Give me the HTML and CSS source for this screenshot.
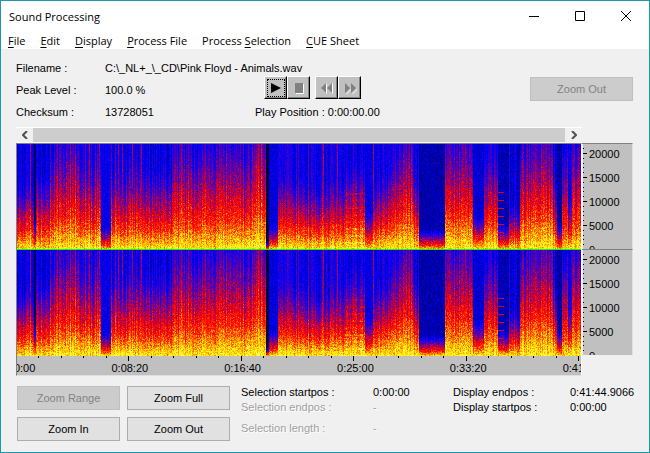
FILE: index.html
```html
<!DOCTYPE html>
<html lang="en">
<head>
    <meta charset="UTF-8">
    <meta name="viewport" content="width=device-width, initial-scale=1.0">
    <title>Sound Processing</title>
    <link rel="stylesheet" href="styles.css">
</head>
<body>

<div class="window">
    <header class="titlebar">
        <h1>Sound Processing</h1>
        <div class="caption-buttons">
            <button class="caption-btn" aria-label="Minimize"><svg width="10" height="10" viewBox="0 0 10 10"><path d="M0 5.5h10"/></svg></button>
            <button class="caption-btn" aria-label="Maximize"><svg width="10" height="10" viewBox="0 0 10 10"><path d="M.5 .5h9v9h-9z"/></svg></button>
            <button class="caption-btn" aria-label="Close"><svg width="10" height="10" viewBox="0 0 10 10"><path d="M0 0l10 10M10 0L0 10"/></svg></button>
        </div>
    </header>

    <nav class="menu">
        <a href="#"><u>F</u>ile</a>
        <a href="#"><u>E</u>dit</a>
        <a href="#"><u>D</u>isplay</a>
        <a href="#"><u>P</u>rocess File</a>
        <a href="#">Process <u>S</u>election</a>
        <a href="#"><u>C</u>UE Sheet</a>
    </nav>

    <main class="content">
        <section class="info">
            <dl class="file-info">
                <dt>Filename :</dt><dd>C:\_NL+_\_CD\Pink Floyd - Animals.wav</dd>
                <dt>Peak Level :</dt><dd>100.0 %</dd>
                <dt>Checksum :</dt><dd>13728051</dd>
            </dl>
            <div class="player">
                <div class="player-buttons">
                    <button class="player-btn focused" aria-label="Play"><svg width="16" height="16" viewBox="0 0 16 16"><path d="M3 3L13 8L3 13z"/></svg></button>
                    <button class="player-btn" aria-label="Stop" disabled><svg width="16" height="16" viewBox="0 0 16 16"><path class="hl" d="M5 4h8v10H5z"/><path d="M4 3h8v10H4z"/></svg></button>
                    <button class="player-btn rewind" aria-label="Rewind" disabled><svg width="16" height="16" viewBox="0 0 16 16"><path class="hl" d="M8 3v11L3 9zM14 3v11L9 9z"/><path d="M7 3v10L2 8zM13 3v10L8 8z"/></svg></button>
                    <button class="player-btn" aria-label="Forward" disabled><svg width="16" height="16" viewBox="0 0 16 16"><path class="hl" d="M4 14L9 9v1L5 14zM10 14L15 9v1L11 14z"/><path d="M3 3L8 8L3 13zM9 3L14 8L9 13z"/></svg></button>
                </div>
                <p class="play-position">Play Position : <span>0:00:00.00</span></p>
            </div>
            <button class="btn zoom-top" disabled>Zoom Out</button>
        </section>

        <section class="display">
            <div class="scrollbar">
                <button class="scroll-btn" aria-label="Scroll left"><svg width="6" height="8" viewBox="0 0 6 8"><path d="M5 0L1 4L5 8"/></svg></button>
                <div class="scroll-thumb"></div>
                <button class="scroll-btn" aria-label="Scroll right"><svg width="6" height="8" viewBox="0 0 6 8"><path d="M1 0L5 4L1 8"/></svg></button>
            </div>

            <div class="channels">
                <canvas class="spectrum" data-seed="11"></canvas>
                <canvas class="spectrum" data-seed="47"></canvas>
                <canvas class="time-ticks"></canvas>
                <div class="time-labels">
                    <span>0:00:00</span><span>0:08:20</span><span>0:16:40</span><span>0:25:00</span><span>0:33:20</span><span>0:41:40</span>
                </div>
            </div>

            <div class="frequencies">
                <div class="freq-axis">
                    <canvas class="freq-ticks"></canvas>
                    <div class="freq-labels"><span>20000</span><span>15000</span><span>10000</span><span>5000</span><span>0</span></div>
                </div>
                <div class="freq-axis">
                    <canvas class="freq-ticks"></canvas>
                    <div class="freq-labels"><span>20000</span><span>15000</span><span>10000</span><span>5000</span><span>0</span></div>
                </div>
            </div>
        </section>

        <section class="footer">
            <div class="zoom-buttons">
                <button class="btn" disabled>Zoom Range</button>
                <button class="btn">Zoom Full</button>
                <button class="btn">Zoom In</button>
                <button class="btn">Zoom Out</button>
            </div>
            <dl class="positions selection">
                <dt>Selection startpos :</dt><dd>0:00:00</dd>
                <dt class="off">Selection endpos :</dt><dd class="off">-</dd>
                <dt class="off length">Selection length :</dt><dd class="off length">-</dd>
            </dl>
            <dl class="positions range">
                <dt>Display endpos :</dt><dd>0:41:44.9066</dd>
                <dt>Display startpos :</dt><dd>0:00:00</dd>
            </dl>
        </section>
    </main>
</div>

<script src="spectrum.js"></script>
</body>
</html>
```
FILE: styles.css
```css
* {
    box-sizing: border-box;
}
body {
    margin: 0;
    background: #f0f0f0;
    color: #000;
    font-family: "Liberation Sans", Arial, sans-serif;
    font-size: 11px;
    line-height: 15px;
}
button {
    font: inherit;
    color: inherit;
    padding: 0;
}
dl, dd, p, h1 {
    margin: 0;
}
.window {
    min-height: 100vh;
    border: 1px solid #1c97a8;
    background: #f0f0f0;
}

/* Title bar and menu */
.titlebar {
    display: flex;
    align-items: center;
    justify-content: space-between;
    height: 30px;
    padding-left: 8px;
    background: #fff;
}
.titlebar h1 {
    font-family: "Open Sans", "Noto Sans", sans-serif;
    font-size: 11px;
    font-weight: 400;
}
.caption-buttons {
    display: flex;
}
.caption-btn {
    display: flex;
    align-items: center;
    justify-content: center;
    width: 46px;
    height: 28px;
    border: none;
    background: none;
}
.caption-btn svg {
    fill: none;
    stroke: #000;
}
.menu {
    display: flex;
    gap: 15px;
    height: 18px;
    padding-left: 7px;
    background: #fff;
    font-family: "Open Sans", "Noto Sans", sans-serif;
    line-height: 20px;
}
.menu a {
    color: #000;
    text-decoration: none;
    white-space: nowrap;
}
.menu u {
    text-underline-offset: 2px;
}
.content {
    padding: 8px 16px 0 15px;
}

/* File info and player */
.info {
    display: flex;
}
.file-info {
    display: grid;
    grid-template-columns: 89px 145px;
    grid-auto-rows: 22px;
    line-height: 22px;
    white-space: nowrap;
}
.player {
    display: flex;
    flex-direction: column;
    padding: 19px 0 0 5px;
}
.player-buttons {
    display: flex;
    padding-left: 9px;
}
.player-btn {
    display: flex;
    align-items: center;
    justify-content: center;
    width: 23px;
    height: 23px;
    border: 1px solid;
    border-color: #fff #000 #000 #fff;
    background: #c0c0c0;
    box-shadow: inset -1px -1px #808080;
}
.player-btn.focused svg {
    outline: 1px dotted #000;
}
.player-btn.rewind {
    margin-left: 5px;
}
.player-btn:disabled path {
    fill: #808080;
}
.player-btn:disabled .hl {
    fill: #fff;
}
.play-position {
    line-height: 22px;
    padding-top: 2px;
}
.btn {
    width: 103px;
    height: 24px;
    border: 1px solid #adadad;
    background: #e1e1e1;
}
.btn:disabled {
    border-color: #bfbfbf;
    background: #ccc;
    color: #838383;
}
.zoom-top {
    margin: 20px 0 0 auto;
}

/* Spectral display */
.display {
    display: grid;
    grid-template-columns: 1fr 51px;
    padding-top: 4px;
}
.scrollbar {
    grid-column: 1;
    display: flex;
    height: 16px;
    border-top: 1px solid #fff;
    border-bottom: 1px solid #f8f8f8;
}
.scroll-btn {
    display: flex;
    align-items: center;
    justify-content: center;
    width: 17px;
    border: none;
    background: #f0f0f0;
}
.scroll-btn svg {
    fill: none;
    stroke: #505050;
    stroke-width: 2;
}
.scroll-thumb {
    flex: 1;
    background: #cdcdcd;
}
.channels {
    grid-column: 1;
    min-width: 0;
    border: 1px solid #808080;
    border-right-color: #fff;
    border-bottom-color: #e0e0e0;
    background: #c0c0c0;
}
.channels canvas {
    display: block;
    width: 100%;
}
.spectrum {
    height: 106px;
    background: #0000e0;
}
.channels .time-ticks {
    height: 5px;
}
.time-labels {
    display: flex;
    justify-content: center;
    height: 14px;
    overflow: hidden;
    line-height: 14px;
    text-align: center;
}
.time-labels span {
    flex: 0 0 20%;
}
.frequencies {
    display: flex;
    flex-direction: column;
}
.freq-axis {
    display: flex;
    height: 106px;
    overflow: hidden;
    border-top: 1px solid #808080;
    border-right: 1px solid #e0e0e0;
    background: #c0c0c0;
}
.freq-ticks {
    width: 5px;
    height: 105px;
}
.freq-labels {
    margin-top: -2px;
    padding-left: 2px;
    line-height: 24px;
}
.freq-labels span {
    display: block;
}

/* Zoom buttons and positions */
.footer {
    display: flex;
    padding-top: 10px;
}
.zoom-buttons {
    display: grid;
    grid-template-columns: 103px 103px;
    gap: 7px;
    padding-left: 1px;
}
.positions {
    display: grid;
    grid-auto-rows: 15px;
    align-content: start;
    line-height: 13px;
    white-space: nowrap;
}
.selection {
    grid-template-columns: 132px 80px;
    padding-left: 11px;
}
.range {
    grid-template-columns: 117px 63px;
}
.off {
    color: #a0a0a0;
    text-shadow: 1px 1px #fff;
}
.length {
    padding-top: 6px;
}
```
FILE: spectrum.js
```js
// Total length and tick spacing of the time axis, in seconds
const DURATION = 2504.9;
const MAJOR = 500;
const MINOR = 100;

// [start, end, loudness, bass, floor], start and end on a 0-565 scale
const SCALE = 565;
const segments = [
    [0, 17, 0.56, 0.08, 0.25],
    [17, 19, 0.25, 0.03, 0.1],
    [19, 34, 0.66, 0.08, 0.26],
    [34, 49, 0.82, 0.16, 0.29],
    [49, 62, 0.98, 0.16, 0.29],
    [62, 77, 0.7, 0.14, 0.29],
    [77, 84, 0.82, 0.14, 0.29],
    [84, 94, 0.18, 0.02, 0.26],
    [94, 112, 0.66, 0.1, 0.27],
    [112, 130, 0.72, 0.1, 0.27],
    [130, 155, 0.68, 0.1, 0.24],
    [155, 183, 0.82, 0.1, 0.29],
    [183, 225, 0.88, 0.14, 0.29],
    [225, 236, 0.76, 0.18, 0.28],
    [236, 249, 1.02, 0.2, 0.31],
    [249, 252, 0.08, 0.02, 0.07],
    [252, 261, 0.2, 0.03, 0.24],
    [261, 290, 0.58, 0.12, 0.27],
    [290, 308, 0.52, 0.12, 0.27],
    [308, 328, 0.56, 0.1, 0.27],
    [328, 348, 0.72, 0.15, 0.26],
    [348, 356, 0.32, 0.05, 0.25],
    [356, 374, 0.6, 0.14, 0.27],
    [374, 384, 0.8, 0.2, 0.29],
    [384, 396, 0.92, 0.22, 0.3],
    [396, 402, 0.64, 0.18, 0.26],
    [402, 428, 0.17, 0.02, 0.19],
    [428, 456, 0.9, 0.18, 0.29],
    [456, 467, 0.29, 0.1, 0.23],
    [467, 481, 0.8, 0.16, 0.27],
    [481, 492, 0.22, 0.03, 0.2],
    [492, 503, 0.38, 0.08, 0.23],
    [503, 520, 0.9, 0.22, 0.29],
    [520, 536, 0.98, 0.24, 0.3],
    [536, 540, 0.62, 0.13, 0.26],
    [540, 545, 0.22, 0.02, 0.18],
    [545, 551, 0.9, 0.08, 0.28],
    [551, 555, 0.4, 0.08, 0.24],
    [555, 565, 0.9, 0.1, 0.28]
];

// Single loud moments
const peaks = [13, 53, 58, 72, 82, 101, 105, 115, 124, 307, 321, 357, 449, 530];

const palette = [
    [0, 0, 0, 0],
    [0.14, 0, 0, 120],
    [0.27, 0, 0, 255],
    [0.43, 120, 0, 140],
    [0.57, 240, 0, 10],
    [0.66, 255, 30, 0],
    [0.76, 255, 130, 0],
    [0.87, 255, 235, 0],
    [1, 255, 255, 120]
];

function colorOf(v) {
    v = Math.max(0, Math.min(1, v));
    let i = 1;
    while (palette[i][0] < v) i++;
    const a = palette[i - 1];
    const b = palette[i];
    const k = (v - a[0]) / (b[0] - a[0]);
    return [1, 2, 3].map(c => a[c] + (b[c] - a[c]) * k);
}

function randomFrom(seed) {
    return () => {
        seed = (seed * 1664525 + 1013904223) >>> 0;
        return seed / 4294967296;
    };
}

function fitCanvas(canvas) {
    canvas.width = canvas.clientWidth;
    canvas.height = canvas.clientHeight;
    return canvas.getContext('2d');
}

// Falls from the bass at the bottom to the floor at the top
function level(t, seg, loud) {
    const top = loud * 1.2;
    const floor = seg[4];
    const fall = t < top ? Math.pow(1 - t / top, 1.35) : 0;
    const boost = Math.max(0, 1 - t / (seg[3] * 2)) * 0.06;
    return floor + (0.84 - floor) * fall + boost;
}

function drawSpectrum(canvas) {
    const ctx = fitCanvas(canvas);
    const w = canvas.width;
    const h = canvas.height;
    const columns = randomFrom(5); // both channels share the same columns
    const grain = randomFrom(Number(canvas.dataset.seed));
    const image = ctx.createImageData(w, h);

    for (let x = 0; x < w; x++) {
        const pos = x * SCALE / w;
        const seg = segments.find(s => pos < s[1]);
        const quiet = seg[2] < 0.35;
        const peak = peaks.includes(Math.round(pos));
        const swing = columns() - 0.5;
        const burst = columns() > 0.86 && !quiet ? 0.08 : 0;
        const loud = seg[2] * (1 + swing * 0.22);

        for (let y = 0; y < h; y++) {
            const t = 1 - y / h;
            let v = level(t, seg, loud);
            v += swing * (quiet ? 0.02 : 0.09) + burst * Math.min(1, t * 2);
            if (peak) v = Math.max(v + 0.07, 0.47);
            // wide grain where it is loud, fine grain over the blue
            v += (grain() + grain() - 1) * (v > 0.4 ? 0.13 : 0.07);
            // harmonics
            if (pos > 328 && pos < 348 && t < 0.55 && y % 7 < 2) v += 0.05;
            if (pos > 481 && pos < 487 && t < 0.6 && y % 8 < 1) v = Math.max(v, 0.55);

            const [r, g, b] = colorOf(v);
            const i = (y * w + x) * 4;
            image.data[i] = r;
            image.data[i + 1] = g;
            image.data[i + 2] = b;
            image.data[i + 3] = 255;
        }
    }
    ctx.putImageData(image, 0, 0);

    if (canvas.matches(':first-child')) {
        ctx.fillStyle = '#00ff00';
        ctx.fillRect(0, h - 1, w, 1);
    }
}

function drawTimeTicks(canvas) {
    const ctx = fitCanvas(canvas);
    for (let s = 0; s < DURATION; s += MINOR) {
        const x = Math.min(canvas.width - 1, Math.floor(s / DURATION * canvas.width) - 1);
        ctx.fillRect(x, 0, 1, s % MAJOR === 0 ? 5 : 2);
    }
}

function drawFreqTicks(canvas) {
    const ctx = fitCanvas(canvas);
    ctx.fillStyle = '#f0f0f0';
    ctx.fillRect(0, 0, 1, canvas.height);
    ctx.fillStyle = '#000';
    for (let khz = 0; khz <= 22; khz++) {
        const y = Math.round(canvas.height - khz * 4.8);
        ctx.fillRect(1, y, khz % 5 === 0 ? 4 : 1, 1);
    }
}

function draw() {
    document.querySelectorAll('.spectrum').forEach(drawSpectrum);
    document.querySelectorAll('.time-ticks').forEach(drawTimeTicks);
    document.querySelectorAll('.freq-ticks').forEach(drawFreqTicks);
}

draw();
window.addEventListener('resize', draw);
```
